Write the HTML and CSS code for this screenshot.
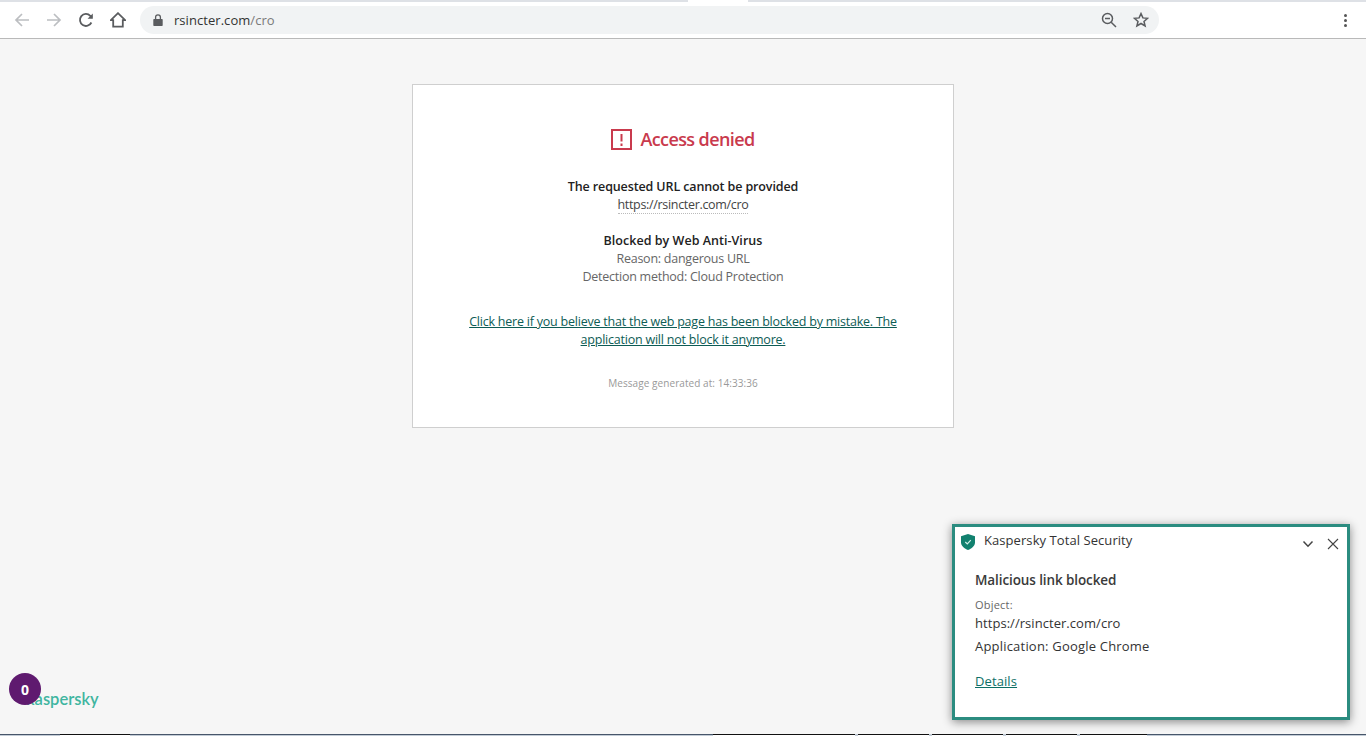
FILE: index.html
```html
<!DOCTYPE html>
<html lang="en">
<head>
<meta charset="utf-8">
<title>Access denied</title>
<link rel="stylesheet" href="styles.css">
</head>
<body>
<div class="tabstrip"><div class="tab-active"></div></div>
<header class="toolbar">
  <div class="nav">
    <svg class="nav-icon" viewBox="0 0 16 16"><path class="dim" d="M15 8H2M8 2 2 8l6 6"/></svg>
    <svg class="nav-icon" viewBox="0 0 16 16"><path class="dim" d="M1 8h13M8 2l6 6-6 6"/></svg>
    <svg class="nav-icon" viewBox="0 0 16 16"><path class="dark" d="M13.4 10.5A6 6 0 1 1 12.3 3.8L14 5.5"/><path class="solid" d="M14.8 1.6v5.2H9.6z"/></svg>
    <svg class="nav-icon" viewBox="0 0 16 16"><path class="dark" d="M8 1.2 .8 8.2h2.4v6.4h9.6V8.2h2.4zM3.2 14.6"/></svg>
  </div>
  <div class="omnibox">
    <svg class="lock" viewBox="0 0 10 12"><path class="solid" d="M1 5h8a.7.7 0 0 1 .7.7v5.6a.7.7 0 0 1-.7.7H1a.7.7 0 0 1-.7-.7V5.700A.7.7 0 0 1 1 5z"/><path class="lock-bow" d="M2.600 5.500V3.300a2.400 2.400 0 0 1 4.800 0v2.200"/></svg>
    <span class="url">rsincter.com<span class="url-path">/cro</span></span>
    <svg class="omni-icon" viewBox="0 0 16 16"><circle class="thin" cx="6.500" cy="6.500" r="5"/><path class="thin" d="M10.200 10.200 15 15M4 6.500h5"/></svg>
    <svg class="omni-icon" viewBox="0 0 16 16"><path class="thin" d="m8 1.600 1.900 4.300 4.700.4-3.600 3.100 1.100 4.600L8 11.500 3.900 14l1.100-4.600-3.600-3.100 4.700-.4z"/></svg>
  </div>
  <div class="menu"><i></i><i></i><i></i></div>
</header>
<main class="page">
  <section class="card">
    <h1 class="title">
      <svg class="warn" viewBox="0 0 21 21"><rect x="1" y="1" width="19" height="19"/><path d="M10.500 5v7.500M10.500 14.500v2.400"/></svg>
      Access denied
    </h1>
    <p class="strong">The requested URL cannot be provided</p>
    <p class="target">https://rsincter.com/cro</p>
    <p class="strong second">Blocked by Web Anti-Virus</p>
    <p class="muted">Reason: dangerous URL</p>
    <p class="muted">Detection method: Cloud Protection</p>
    <a class="report" href="#">Click here if you believe that the web page has been blocked by mistake. The application will not block it anymore.</a>
    <p class="stamp">Message generated at: 14:33:36</p>
  </section>
  <div class="brand">
    <span class="brand-name">kaspersky</span>
    <span class="counter">0</span>
  </div>
  <aside class="toast">
    <div class="toast-head">
      <svg class="shield" viewBox="0 0 14 16"><path d="M7 0 14 2.200V8.500C14 12 10.500 14.700 7 16 3.500 14.700 0 12 0 8.500V2.200z"/><path class="tick" d="m4.300 8 2 2 3.500-3.800"/></svg>
      <span class="toast-app">Kaspersky Total Security</span>
      <svg class="toast-btn" viewBox="0 0 12 12"><path d="M1.500 3.500 6 8.200l4.500-4.700"/></svg>
      <svg class="toast-btn" viewBox="0 0 12 12"><path class="x" d="m1 1 10 10M11 1 1 11"/></svg>
    </div>
    <div class="toast-body">
      <h2 class="toast-title">Malicious link blocked</h2>
      <div class="toast-label">Object:</div>
      <div class="toast-line url-line">https://rsincter.com/cro</div>
      <div class="toast-line app">Application: Google Chrome</div>
      <a class="toast-link" href="#">Details</a>
    </div>
  </aside>
</main>
<footer class="taskbar">
  <span class="seg pale s1"></span><span class="seg dark s2"></span><span class="seg pale s3"></span><span class="seg dark s4"></span><span class="seg dark s5"></span><span class="seg dark s5"></span><span class="seg dark s5"></span><span class="seg dark s6"></span><span class="seg pale s7"></span>
</footer>
</body>
</html>
```
FILE: styles.css
```css
* { box-sizing: border-box; }
html, body { height: 100%; }
body {
  margin: 0;
  height: 736px;
  overflow: hidden;
  display: flex;
  flex-direction: column;
  background: #f6f6f6;
  color: #2a2a2a;
  font-family: "Open Sans", "Noto Sans", sans-serif;
}
p, h1, h2 { margin: 0; font-weight: normal; }

.tabstrip { height: 2px; flex: none; background: #dee1e6; display: flex; justify-content: center; }
.tab-active { width: 60px; height: 2px; background: #fff; margin-left: 70px; }

.toolbar {
  height: 37px;
  flex: none;
  display: flex;
  align-items: center;
  background: #fff;
  border-bottom: 1px solid #b9b9b9;
  padding: 0 0 0 14px;
}
.nav { display: flex; gap: 16px; align-items: center; width: 126px; }
.nav-icon { width: 16px; height: 16px; fill: none; }
.dim { stroke: #bcbec1; stroke-width: 1.700; fill: none; }
.dark { stroke: #5a5c5f; stroke-width: 1.800; fill: none; }
.solid { fill: #5a5c5f; stroke: none; }
.omnibox {
  width: 1019px;
  height: 28px;
  border-radius: 14px;
  background: #f1f3f4;
  display: flex;
  align-items: center;
  padding: 0 10px 0 13px;
}
.lock { width: 10px; height: 12px; margin-right: 11px; }
.lock-bow { fill: none; stroke: #5a5c5f; stroke-width: 1.300; }
.url { flex: 1; font-size: 13px; letter-spacing: .05px; color: #333; }
.url-path { color: #7a7a7a; }
.omni-icon { width: 16px; height: 16px; margin-left: 16px; }
.thin { fill: none; stroke: #5a5c5f; stroke-width: 1.500; }
.menu { margin-left: auto; margin-right: 19px; display: flex; flex-direction: column; gap: 2px; }
.menu i { width: 3px; height: 3px; border-radius: 50%; background: #555; display: block; }

.page { flex: 1; position: relative; display: flex; justify-content: center; align-items: flex-start; padding-top: 45px; }

.card {
  width: 542px;
  height: 344px;
  background: #fff;
  border: 1px solid #cfcfcf;
  padding-top: 40px;
  text-align: center;
  font-size: 12.500px;
  line-height: 18px;
  color: #444;
  letter-spacing: -.25px;
}
.title {
  display: flex;
  justify-content: center;
  align-items: center;
  gap: 8px;
  height: 28px;
  font-size: 18px;
  font-weight: 600;
  letter-spacing: -.6px;
  color: #c93a4d;
  margin-bottom: 25px;
}
.warn { width: 21px; height: 21px; fill: none; stroke: #c93a4d; stroke-width: 2; }
.strong { font-weight: 600; color: #222; letter-spacing: -.12px; }
.target { display: table; margin: 0 auto; border-bottom: 1px dotted #bbb; line-height: 17px; letter-spacing: -.32px; }
.strong.second { margin-top: 18px; letter-spacing: .03px; }
.muted { color: #666; }
.report {
  display: block;
  width: 440px;
  margin: 27px auto 0;
  color: #0d5c55;
  letter-spacing: -.22px;
  text-decoration: underline;
}
.stamp { margin-top: 25px; font-size: 10px; letter-spacing: .07px; color: #999; }

.brand { position: absolute; left: 9px; bottom: 29px; display: flex; align-items: center; }
.brand-name { position: absolute; left: 17px; top: 17px; font-size: 16.500px; font-weight: 600; color: #3fb5a0; font-family: "Lato", sans-serif; line-height: 18px; }
.counter {
  position: relative;
  width: 32px; height: 32px;
  border-radius: 50%;
  background: #5f1a6f;
  color: #fff;
  font-size: 14px;
  font-weight: 700;
  display: flex; align-items: center; justify-content: center;
}

.toast {
  position: absolute;
  left: 952px;
  top: 485px;
  width: 398px;
  height: 196px;
  background: #fff;
  border: 3px solid #2b8c80;
  box-shadow: 0 2px 9px rgba(0,0,0,.45);
  color: #333;
}
.toast-head { display: flex; align-items: center; height: 30px; padding: 0 8px 0 6px; }
.shield { width: 14px; height: 16px; fill: #12816f; margin-right: 9px; }
.tick { fill: none; stroke: #cfeee7; stroke-width: 1.200; }
.toast-app { flex: 1; font-size: 13px; letter-spacing: .07px; margin-top: -5px; }
.toast-btn { width: 12px; height: 12px; margin-left: 13px; fill: none; stroke: #444; stroke-width: 1.500; margin-top: 3px; }
.toast-btn .x { stroke-width: 1.100; }
.toast-body { padding: 14px 20px 0; }
.toast-title { font-size: 13.500px; font-weight: 600; letter-spacing: -.1px; line-height: 18px; color: #3a3a3a; }
.toast-label { margin-top: 8px; font-size: 11px; line-height: 15px; color: #666; letter-spacing: .2px; }
.toast-line { font-size: 13px; line-height: 18px; margin-top: 2px; }
.url-line { letter-spacing: .05px; }
.toast-line.app { margin-top: 5px; letter-spacing: .2px; }
.toast-link { display: inline-block; margin-top: 17px; font-size: 13px; line-height: 18px; color: #0d6f66; letter-spacing: .1px; text-decoration: underline; }

.taskbar { height: 2px; flex: none; display: flex; background: #c3ccd6; }
.seg { display: block; height: 2px; border-top: 1px solid #47566a; }
.seg.pale { background: #c3ccd6; }
.seg.dark { background: #fff; border-top-color: #111; margin-right: 3px; }
.s1 { width: 60px; }
.s2 { width: 70px; }
.s3 { width: 583px; }
.s4 { width: 142px; }
.s5 { width: 71px; }
.s6 { width: 67px; }
.s7 { flex: 1; }
.seg.s2, .seg.s6 { margin-right: 0; }
```
